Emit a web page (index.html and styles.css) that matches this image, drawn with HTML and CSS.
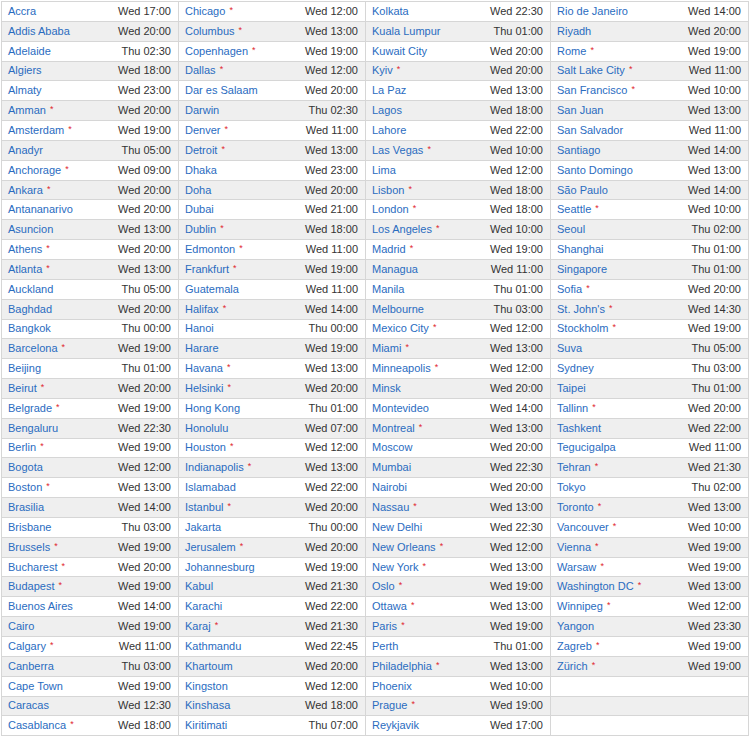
FILE: index.html
```html
<!DOCTYPE html>
<html lang="en">
<head>
<meta charset="utf-8">
<title>World Clock</title>
<link rel="stylesheet" href="styles.css">
</head>
<body>
<div class="board">
<ul class="col c1">
<li class="row"><a class="city">Accra</a><span class="time">Wed 17:00</span></li>
<li class="row"><a class="city">Addis Ababa</a><span class="time">Wed 20:00</span></li>
<li class="row"><a class="city">Adelaide</a><span class="time">Thu 02:30</span></li>
<li class="row"><a class="city">Algiers</a><span class="time">Wed 18:00</span></li>
<li class="row"><a class="city">Almaty</a><span class="time">Wed 23:00</span></li>
<li class="row"><a class="city">Amman <span class="dst">*</span></a><span class="time">Wed 20:00</span></li>
<li class="row"><a class="city">Amsterdam <span class="dst">*</span></a><span class="time">Wed 19:00</span></li>
<li class="row"><a class="city">Anadyr</a><span class="time">Thu 05:00</span></li>
<li class="row"><a class="city">Anchorage <span class="dst">*</span></a><span class="time">Wed 09:00</span></li>
<li class="row"><a class="city">Ankara <span class="dst">*</span></a><span class="time">Wed 20:00</span></li>
<li class="row"><a class="city">Antananarivo</a><span class="time">Wed 20:00</span></li>
<li class="row"><a class="city">Asuncion</a><span class="time">Wed 13:00</span></li>
<li class="row"><a class="city">Athens <span class="dst">*</span></a><span class="time">Wed 20:00</span></li>
<li class="row"><a class="city">Atlanta <span class="dst">*</span></a><span class="time">Wed 13:00</span></li>
<li class="row"><a class="city">Auckland</a><span class="time">Thu 05:00</span></li>
<li class="row"><a class="city">Baghdad</a><span class="time">Wed 20:00</span></li>
<li class="row"><a class="city">Bangkok</a><span class="time">Thu 00:00</span></li>
<li class="row"><a class="city">Barcelona <span class="dst">*</span></a><span class="time">Wed 19:00</span></li>
<li class="row"><a class="city">Beijing</a><span class="time">Thu 01:00</span></li>
<li class="row"><a class="city">Beirut <span class="dst">*</span></a><span class="time">Wed 20:00</span></li>
<li class="row"><a class="city">Belgrade <span class="dst">*</span></a><span class="time">Wed 19:00</span></li>
<li class="row"><a class="city">Bengaluru</a><span class="time">Wed 22:30</span></li>
<li class="row"><a class="city">Berlin <span class="dst">*</span></a><span class="time">Wed 19:00</span></li>
<li class="row"><a class="city">Bogota</a><span class="time">Wed 12:00</span></li>
<li class="row"><a class="city">Boston <span class="dst">*</span></a><span class="time">Wed 13:00</span></li>
<li class="row"><a class="city">Brasilia</a><span class="time">Wed 14:00</span></li>
<li class="row"><a class="city">Brisbane</a><span class="time">Thu 03:00</span></li>
<li class="row"><a class="city">Brussels <span class="dst">*</span></a><span class="time">Wed 19:00</span></li>
<li class="row"><a class="city">Bucharest <span class="dst">*</span></a><span class="time">Wed 20:00</span></li>
<li class="row"><a class="city">Budapest <span class="dst">*</span></a><span class="time">Wed 19:00</span></li>
<li class="row"><a class="city">Buenos Aires</a><span class="time">Wed 14:00</span></li>
<li class="row"><a class="city">Cairo</a><span class="time">Wed 19:00</span></li>
<li class="row"><a class="city">Calgary <span class="dst">*</span></a><span class="time">Wed 11:00</span></li>
<li class="row"><a class="city">Canberra</a><span class="time">Thu 03:00</span></li>
<li class="row"><a class="city">Cape Town</a><span class="time">Wed 19:00</span></li>
<li class="row"><a class="city">Caracas</a><span class="time">Wed 12:30</span></li>
<li class="row"><a class="city">Casablanca <span class="dst">*</span></a><span class="time">Wed 18:00</span></li>
</ul>
<ul class="col c2">
<li class="row"><a class="city">Chicago <span class="dst">*</span></a><span class="time">Wed 12:00</span></li>
<li class="row"><a class="city">Columbus <span class="dst">*</span></a><span class="time">Wed 13:00</span></li>
<li class="row"><a class="city">Copenhagen <span class="dst">*</span></a><span class="time">Wed 19:00</span></li>
<li class="row"><a class="city">Dallas <span class="dst">*</span></a><span class="time">Wed 12:00</span></li>
<li class="row"><a class="city">Dar es Salaam</a><span class="time">Wed 20:00</span></li>
<li class="row"><a class="city">Darwin</a><span class="time">Thu 02:30</span></li>
<li class="row"><a class="city">Denver <span class="dst">*</span></a><span class="time">Wed 11:00</span></li>
<li class="row"><a class="city">Detroit <span class="dst">*</span></a><span class="time">Wed 13:00</span></li>
<li class="row"><a class="city">Dhaka</a><span class="time">Wed 23:00</span></li>
<li class="row"><a class="city">Doha</a><span class="time">Wed 20:00</span></li>
<li class="row"><a class="city">Dubai</a><span class="time">Wed 21:00</span></li>
<li class="row"><a class="city">Dublin <span class="dst">*</span></a><span class="time">Wed 18:00</span></li>
<li class="row"><a class="city">Edmonton <span class="dst">*</span></a><span class="time">Wed 11:00</span></li>
<li class="row"><a class="city">Frankfurt <span class="dst">*</span></a><span class="time">Wed 19:00</span></li>
<li class="row"><a class="city">Guatemala</a><span class="time">Wed 11:00</span></li>
<li class="row"><a class="city">Halifax <span class="dst">*</span></a><span class="time">Wed 14:00</span></li>
<li class="row"><a class="city">Hanoi</a><span class="time">Thu 00:00</span></li>
<li class="row"><a class="city">Harare</a><span class="time">Wed 19:00</span></li>
<li class="row"><a class="city">Havana <span class="dst">*</span></a><span class="time">Wed 13:00</span></li>
<li class="row"><a class="city">Helsinki <span class="dst">*</span></a><span class="time">Wed 20:00</span></li>
<li class="row"><a class="city">Hong Kong</a><span class="time">Thu 01:00</span></li>
<li class="row"><a class="city">Honolulu</a><span class="time">Wed 07:00</span></li>
<li class="row"><a class="city">Houston <span class="dst">*</span></a><span class="time">Wed 12:00</span></li>
<li class="row"><a class="city">Indianapolis <span class="dst">*</span></a><span class="time">Wed 13:00</span></li>
<li class="row"><a class="city">Islamabad</a><span class="time">Wed 22:00</span></li>
<li class="row"><a class="city">Istanbul <span class="dst">*</span></a><span class="time">Wed 20:00</span></li>
<li class="row"><a class="city">Jakarta</a><span class="time">Thu 00:00</span></li>
<li class="row"><a class="city">Jerusalem <span class="dst">*</span></a><span class="time">Wed 20:00</span></li>
<li class="row"><a class="city">Johannesburg</a><span class="time">Wed 19:00</span></li>
<li class="row"><a class="city">Kabul</a><span class="time">Wed 21:30</span></li>
<li class="row"><a class="city">Karachi</a><span class="time">Wed 22:00</span></li>
<li class="row"><a class="city">Karaj <span class="dst">*</span></a><span class="time">Wed 21:30</span></li>
<li class="row"><a class="city">Kathmandu</a><span class="time">Wed 22:45</span></li>
<li class="row"><a class="city">Khartoum</a><span class="time">Wed 20:00</span></li>
<li class="row"><a class="city">Kingston</a><span class="time">Wed 12:00</span></li>
<li class="row"><a class="city">Kinshasa</a><span class="time">Wed 18:00</span></li>
<li class="row"><a class="city">Kiritimati</a><span class="time">Thu 07:00</span></li>
</ul>
<ul class="col c3">
<li class="row"><a class="city">Kolkata</a><span class="time">Wed 22:30</span></li>
<li class="row"><a class="city">Kuala Lumpur</a><span class="time">Thu 01:00</span></li>
<li class="row"><a class="city">Kuwait City</a><span class="time">Wed 20:00</span></li>
<li class="row"><a class="city">Kyiv <span class="dst">*</span></a><span class="time">Wed 20:00</span></li>
<li class="row"><a class="city">La Paz</a><span class="time">Wed 13:00</span></li>
<li class="row"><a class="city">Lagos</a><span class="time">Wed 18:00</span></li>
<li class="row"><a class="city">Lahore</a><span class="time">Wed 22:00</span></li>
<li class="row"><a class="city">Las Vegas <span class="dst">*</span></a><span class="time">Wed 10:00</span></li>
<li class="row"><a class="city">Lima</a><span class="time">Wed 12:00</span></li>
<li class="row"><a class="city">Lisbon <span class="dst">*</span></a><span class="time">Wed 18:00</span></li>
<li class="row"><a class="city">London <span class="dst">*</span></a><span class="time">Wed 18:00</span></li>
<li class="row"><a class="city">Los Angeles <span class="dst">*</span></a><span class="time">Wed 10:00</span></li>
<li class="row"><a class="city">Madrid <span class="dst">*</span></a><span class="time">Wed 19:00</span></li>
<li class="row"><a class="city">Managua</a><span class="time">Wed 11:00</span></li>
<li class="row"><a class="city">Manila</a><span class="time">Thu 01:00</span></li>
<li class="row"><a class="city">Melbourne</a><span class="time">Thu 03:00</span></li>
<li class="row"><a class="city">Mexico City <span class="dst">*</span></a><span class="time">Wed 12:00</span></li>
<li class="row"><a class="city">Miami <span class="dst">*</span></a><span class="time">Wed 13:00</span></li>
<li class="row"><a class="city">Minneapolis <span class="dst">*</span></a><span class="time">Wed 12:00</span></li>
<li class="row"><a class="city">Minsk</a><span class="time">Wed 20:00</span></li>
<li class="row"><a class="city">Montevideo</a><span class="time">Wed 14:00</span></li>
<li class="row"><a class="city">Montreal <span class="dst">*</span></a><span class="time">Wed 13:00</span></li>
<li class="row"><a class="city">Moscow</a><span class="time">Wed 20:00</span></li>
<li class="row"><a class="city">Mumbai</a><span class="time">Wed 22:30</span></li>
<li class="row"><a class="city">Nairobi</a><span class="time">Wed 20:00</span></li>
<li class="row"><a class="city">Nassau <span class="dst">*</span></a><span class="time">Wed 13:00</span></li>
<li class="row"><a class="city">New Delhi</a><span class="time">Wed 22:30</span></li>
<li class="row"><a class="city">New Orleans <span class="dst">*</span></a><span class="time">Wed 12:00</span></li>
<li class="row"><a class="city">New York <span class="dst">*</span></a><span class="time">Wed 13:00</span></li>
<li class="row"><a class="city">Oslo <span class="dst">*</span></a><span class="time">Wed 19:00</span></li>
<li class="row"><a class="city">Ottawa <span class="dst">*</span></a><span class="time">Wed 13:00</span></li>
<li class="row"><a class="city">Paris <span class="dst">*</span></a><span class="time">Wed 19:00</span></li>
<li class="row"><a class="city">Perth</a><span class="time">Thu 01:00</span></li>
<li class="row"><a class="city">Philadelphia <span class="dst">*</span></a><span class="time">Wed 13:00</span></li>
<li class="row"><a class="city">Phoenix</a><span class="time">Wed 10:00</span></li>
<li class="row"><a class="city">Prague <span class="dst">*</span></a><span class="time">Wed 19:00</span></li>
<li class="row"><a class="city">Reykjavik</a><span class="time">Wed 17:00</span></li>
</ul>
<ul class="col c4">
<li class="row"><a class="city">Rio de Janeiro</a><span class="time">Wed 14:00</span></li>
<li class="row"><a class="city">Riyadh</a><span class="time">Wed 20:00</span></li>
<li class="row"><a class="city">Rome <span class="dst">*</span></a><span class="time">Wed 19:00</span></li>
<li class="row"><a class="city">Salt Lake City <span class="dst">*</span></a><span class="time">Wed 11:00</span></li>
<li class="row"><a class="city">San Francisco <span class="dst">*</span></a><span class="time">Wed 10:00</span></li>
<li class="row"><a class="city">San Juan</a><span class="time">Wed 13:00</span></li>
<li class="row"><a class="city">San Salvador</a><span class="time">Wed 11:00</span></li>
<li class="row"><a class="city">Santiago</a><span class="time">Wed 14:00</span></li>
<li class="row"><a class="city">Santo Domingo</a><span class="time">Wed 13:00</span></li>
<li class="row"><a class="city">São Paulo</a><span class="time">Wed 14:00</span></li>
<li class="row"><a class="city">Seattle <span class="dst">*</span></a><span class="time">Wed 10:00</span></li>
<li class="row"><a class="city">Seoul</a><span class="time">Thu 02:00</span></li>
<li class="row"><a class="city">Shanghai</a><span class="time">Thu 01:00</span></li>
<li class="row"><a class="city">Singapore</a><span class="time">Thu 01:00</span></li>
<li class="row"><a class="city">Sofia <span class="dst">*</span></a><span class="time">Wed 20:00</span></li>
<li class="row"><a class="city">St. John's <span class="dst">*</span></a><span class="time">Wed 14:30</span></li>
<li class="row"><a class="city">Stockholm <span class="dst">*</span></a><span class="time">Wed 19:00</span></li>
<li class="row"><a class="city">Suva</a><span class="time">Thu 05:00</span></li>
<li class="row"><a class="city">Sydney</a><span class="time">Thu 03:00</span></li>
<li class="row"><a class="city">Taipei</a><span class="time">Thu 01:00</span></li>
<li class="row"><a class="city">Tallinn <span class="dst">*</span></a><span class="time">Wed 20:00</span></li>
<li class="row"><a class="city">Tashkent</a><span class="time">Wed 22:00</span></li>
<li class="row"><a class="city">Tegucigalpa</a><span class="time">Wed 11:00</span></li>
<li class="row"><a class="city">Tehran <span class="dst">*</span></a><span class="time">Wed 21:30</span></li>
<li class="row"><a class="city">Tokyo</a><span class="time">Thu 02:00</span></li>
<li class="row"><a class="city">Toronto <span class="dst">*</span></a><span class="time">Wed 13:00</span></li>
<li class="row"><a class="city">Vancouver <span class="dst">*</span></a><span class="time">Wed 10:00</span></li>
<li class="row"><a class="city">Vienna <span class="dst">*</span></a><span class="time">Wed 19:00</span></li>
<li class="row"><a class="city">Warsaw <span class="dst">*</span></a><span class="time">Wed 19:00</span></li>
<li class="row"><a class="city">Washington DC <span class="dst">*</span></a><span class="time">Wed 13:00</span></li>
<li class="row"><a class="city">Winnipeg <span class="dst">*</span></a><span class="time">Wed 12:00</span></li>
<li class="row"><a class="city">Yangon</a><span class="time">Wed 23:30</span></li>
<li class="row"><a class="city">Zagreb <span class="dst">*</span></a><span class="time">Wed 19:00</span></li>
<li class="row"><a class="city">Zürich <span class="dst">*</span></a><span class="time">Wed 19:00</span></li>
<li class="row"></li>
<li class="row"></li>
<li class="row"></li>
</ul>
</div>
</body>
</html>
```
FILE: styles.css
```css
html, body {
  margin: 0;
  padding: 0;
  background: #ffffff;
}

body {
  padding: 1px 0 0 1px;
  font-family: "Liberation Sans", Arial, Helvetica, sans-serif;
  font-size: 11px;
  color: #333333;
}

.board {
  display: grid;
  grid-template-columns: 177px 187px 185px 198px;
  border-top: 1px solid #d6d6d6;
  border-left: 1px solid #d6d6d6;
  width: max-content;
}

.col {
  list-style: none;
  margin: 0;
  padding: 0;
  border-right: 1px solid #d6d6d6;
}

.row {
  display: flex;
  justify-content: space-between;
  align-items: center;
  height: 18.85px;
  line-height: 13px;
  padding: 0 7px 0 6px;
  border-bottom: 1px solid #d6d6d6;
  background: #ffffff;
  white-space: nowrap;
}

.row:nth-child(even) {
  background: #efefef;
}

.city {
  color: #2a6cbf;
  text-decoration: none;
  cursor: pointer;
}

.dst {
  color: #e0262d;
  font-size: 9px;
  line-height: 0;
  vertical-align: 2px;
  margin-left: 1px;
}

.time {
  color: #333333;
}
```
